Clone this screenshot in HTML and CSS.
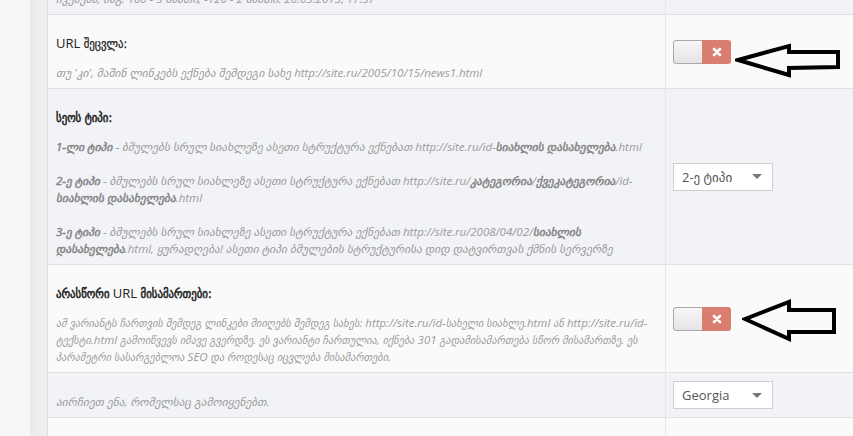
FILE: index.html
```html
<!DOCTYPE html>
<html lang="ka">
<head>
<meta charset="utf-8">
<title>SEO settings</title>
<link rel="stylesheet" href="styles.css">
</head>
<body>
<div class="page">
  <div class="gutter"></div>
  <div class="edge"></div>
  <div class="content">
    <div class="settings">
      <div class="row alt">
        <div class="cell main">
          <div class="desc">ჩვენება, მაგ: 180 - 3 საათი, -120 - 2 საათი. 20.03.2013, 17:37</div>
        </div>
        <div class="cell side"></div>
      </div>

      <div class="row">
        <div class="cell main">
          <div class="title">URL <span class="ka">შეცვლა:</span></div>
          <div class="desc">თუ 'კი', მაშინ ლინკებს ექნება შემდეგი სახე http://site.ru/2005/10/15/news1.html</div>
        </div>
        <div class="cell side">
          <div class="toggle"><span class="knob"></span><span class="off"><svg viewBox="0 0 10 10" width="10" height="10"><path d="M2 2 L8 8 M8 2 L2 8" stroke="#fff" stroke-width="2.6" stroke-linecap="round"/></svg></span></div>
          <svg class="arrow arrow-1" width="110" height="40" viewBox="0 0 110 40"><path d="M3 17 L54 3 L54 9 L103 9 L103 24 L54 25 L54 32 Z" fill="none" stroke="#000" stroke-width="4" stroke-linejoin="miter"/></svg>
        </div>
      </div>

      <div class="row alt">
        <div class="cell main">
          <div class="title bold"><span class="ka">სეოს ტიპი:</span></div>
          <div class="desc">
            <p><b>1-ლი ტიპი</b> - ბმულებს სრულ სიახლეზე ასეთი სტრუქტურა ექნებათ http://site.ru/id-<b>სიახლის დასახელება</b>.html</p>
            <p><b>2-ე ტიპი</b> - ბმულებს სრულ სიახლეზე ასეთი სტრუქტურა ექნებათ http://site.ru/<b>კატეგორია</b>/<b>ქვეკატეგორია</b>/id-<br><b>სიახლის დასახელება</b>.html</p>
            <p><b>3-ე ტიპი</b> - ბმულებს სრულ სიახლეზე ასეთი სტრუქტურა ექნებათ http://site.ru/2008/04/02/<b>სიახლის</b><br><b>დასახელება</b>.html, ყურადღება! ასეთი ტიპი ბმულების სტრუქტურისა დიდ დატვირთვას ქმნის სერვერზე</p>
          </div>
        </div>
        <div class="cell side">
          <div class="select"><span>2-ე ტიპი</span><i class="caret"></i></div>
        </div>
      </div>

      <div class="row">
        <div class="cell main">
          <div class="title bold"><span class="ka">არასწორი</span> URL <span class="ka">მისამართები:</span></div>
          <div class="desc tight">ამ ვარიანტს ჩართვის შემდეგ ლინკები მიიღებს შემდეგ სახეს: http://site.ru/id-სახელი სიახლე.html ან http://site.ru/id-<br>ტექსტი.html გამოიწვევს იმავე გვერდზე. ეს ვარიანტი ჩართულია, იქნება 301 გადამისამართება სწორ მისამართზე. ეს<br>პარამეტრი სასარგებლოა SEO და როდესაც იცვლება მისამართები.</div>
        </div>
        <div class="cell side">
          <div class="toggle"><span class="knob"></span><span class="off"><svg viewBox="0 0 10 10" width="10" height="10"><path d="M2 2 L8 8 M8 2 L2 8" stroke="#fff" stroke-width="2.6" stroke-linecap="round"/></svg></span></div>
          <svg class="arrow arrow-2" width="100" height="44" viewBox="0 0 100 44"><path d="M3 20 L47 3 L47 11 L92 11 L92 33 L47 33 L47 40 Z" fill="none" stroke="#000" stroke-width="4" stroke-linejoin="miter"/></svg>
        </div>
      </div>

      <div class="row alt">
        <div class="cell main">
          <div class="desc">აირჩიეთ ენა, რომელსაც გამოიყენებთ.</div>
        </div>
        <div class="cell side">
          <div class="select"><span>Georgia</span><i class="caret"></i></div>
        </div>
      </div>

      <div class="row">
        <div class="cell main"><div class="desc">&nbsp;</div></div>
        <div class="cell side"></div>
      </div>
    </div>
  </div>
</div>
</body>
</html>
```

FILE: styles.css
```css
html, body {
  margin: 0;
  padding: 0;
  height: 100%;
  overflow: hidden;
}
body {
  background: #f6f6f6;
  font-family: "Open Sans", "DejaVu Sans", sans-serif;
  font-size: 13px;
  color: #333;
}
.page {
  display: flex;
  min-height: 100%;
}
.gutter {
  width: 30px;
  flex: none;
  background: #f6f6f6;
}
.edge {
  width: 17px;
  flex: none;
  background: linear-gradient(to right, #e9e9e9, #ededed 40%, #efefef);
}
.content {
  flex: 1;
  border-left: 1px solid #dedede;
  background: #fafafa;
}
.settings {
  margin-top: -30px;
}
.row {
  display: grid;
  grid-template-columns: 1fr 188px;
  background: #fafafa;
  border-bottom: 1px solid #e1e1e1;
}
.row.alt {
  background: #f2f3f7;
}
.cell.main {
  padding: 20px 8px 7px 8px;
}
.cell.side {
  position: relative;
  border-left: 1px solid #e6e6e6;
  padding: 0 8px 0 7px;
  display: flex;
  align-items: center;
}
.title {
  height: 17px;
  line-height: 17px;
  font-size: 13px;
  color: #222;
  margin-bottom: 12px;
}
.title .ka {
  font-family: "DejaVu Sans Condensed", "DejaVu Sans", sans-serif;
  font-size: 12px;
  line-height: 1;
  -webkit-text-stroke: 0.25px #222;
}
.title.bold .ka {
  -webkit-text-stroke: 0.5px #222;
}
.desc {
  font-size: 11.5px;
  line-height: 17px;
  font-style: italic;
  color: #9a9a9a;
}
.desc.tight {
  font-family: "Open Sans", "DejaVu Sans Condensed", "DejaVu Sans", sans-serif;
}
.desc p {
  margin: 0 0 17px 0;
}
.desc p:last-child {
  margin-bottom: 0;
}
.desc b {
  font-weight: normal;
  color: #858585;
  -webkit-text-stroke: 0.5px #858585;
}
.toggle {
  display: flex;
  width: 58px;
  height: 24px;
  border-radius: 3px;
  overflow: hidden;
}
.knob {
  width: 29px;
  box-sizing: border-box;
  border: 1px solid #a9a9a9;
  border-right: none;
  border-radius: 3px 0 0 3px;
  background: linear-gradient(#f7f7f7, #e4e4e4);
}
.off {
  width: 29px;
  background: #d97e70;
  display: flex;
  align-items: center;
  justify-content: center;
}
.select {
  width: 100px;
  height: 28px;
  box-sizing: border-box;
  border: 1px solid #cfcfcf;
  background: #fff;
  display: flex;
  align-items: center;
  justify-content: space-between;
  padding: 0 10px 0 8px;
  font-size: 13px;
  color: #555;
}
.caret {
  width: 0;
  height: 0;
  border-left: 5px solid transparent;
  border-right: 5px solid transparent;
  border-top: 5px solid #777;
}
.arrow {
  position: absolute;
}
.arrow-1 {
  left: 69px;
  top: 28px;
}
.arrow-2 {
  left: 76px;
  top: 34px;
}
```
